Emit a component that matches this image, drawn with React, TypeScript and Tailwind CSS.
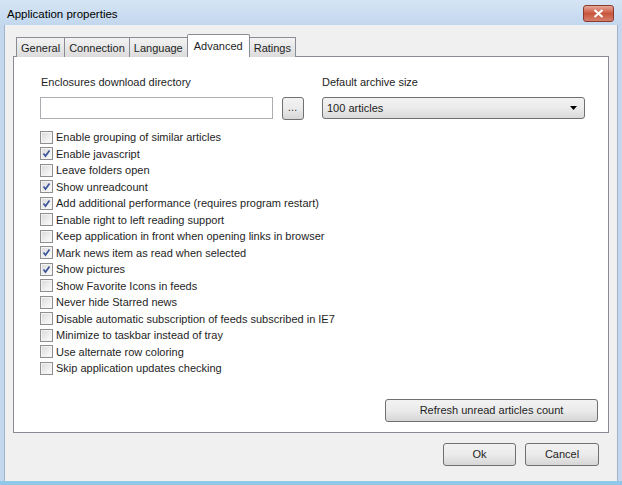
import React from 'react'

const options: { label: string; checked: boolean }[] = [
  { label: 'Enable grouping of similar articles', checked: false },
  { label: 'Enable javascript', checked: true },
  { label: 'Leave folders open', checked: false },
  { label: 'Show unreadcount', checked: true },
  { label: 'Add additional performance (requires program restart)', checked: true },
  { label: 'Enable right to left reading support', checked: false },
  { label: 'Keep application in front when opening links in browser', checked: false },
  { label: 'Mark news item as read when selected', checked: true },
  { label: 'Show pictures', checked: true },
  { label: 'Show Favorite Icons in feeds', checked: false },
  { label: 'Never hide Starred news', checked: false },
  { label: 'Disable automatic subscription of feeds subscribed in IE7', checked: false },
  { label: 'Minimize to taskbar instead of tray', checked: false },
  { label: 'Use alternate row coloring', checked: false },
  { label: 'Skip application updates checking', checked: false },
]

const tabs = ['General', 'Connection', 'Language', 'Advanced', 'Ratings']

function Checkbox({ checked }: { checked: boolean }) {
  return (
    <span className="w-[13px] h-[13px] border border-[#8f8f8f] bg-white flex items-center justify-center flex-shrink-0">
      <span className="w-[11px] h-[11px] border border-[#f4f4f4] bg-gradient-to-br from-[#dcdcdc] to-[#fbfbfb] flex items-center justify-center">
        {checked && (
          <svg width="9" height="9" viewBox="0 0 9 9">
            <path d="M1.5 4.5 L3.5 7 L7.5 1.5" fill="none" stroke="#3b559a" strokeWidth="1.7" />
          </svg>
        )}
      </span>
    </span>
  )
}

function Button({ children, className }: { children: React.ReactNode; className?: string }) {
  return (
    <div
      className={
        'h-[23px] border border-[#707070] rounded-[3px] bg-gradient-to-b from-[#f2f2f2] via-[#ebebeb] to-[#d6d6d6] flex items-center justify-center text-[#1e1e1e] ' +
        (className ?? '')
      }
    >
      {children}
    </div>
  )
}

export default function App() {
  return (
    <div
      className="w-[622px] h-[485px] flex flex-col bg-[#c4d7ec] overflow-hidden text-[11px] text-[#1e1e1e]"
      style={{ fontFamily: 'Tahoma, "Liberation Sans", Arial, sans-serif' }}
    >
      {/* Title bar */}
      <div className="h-[25px] flex-shrink-0 flex items-start justify-between bg-gradient-to-b from-[#d6e5f5] to-[#c2d7ee] pl-[7px] pr-[8px]">
        <span className="pt-[6px] text-[11.5px] text-black">Application properties</span>
        <div className="mt-[5px] w-[31px] h-[17px] rounded-[3px] border border-[#8a3a2c] bg-gradient-to-b from-[#e6a89a] via-[#c9543c] to-[#d4806b] flex items-center justify-center">
          <svg width="11" height="9" viewBox="0 0 11 9">
            <path d="M1.5 1 L9.5 8 M9.5 1 L1.5 8" stroke="#ffffff" strokeWidth="2.2" />
          </svg>
        </div>
      </div>

      {/* Client area */}
      <div className="flex-1 flex flex-col bg-[#f0f0f0] mx-[4px] border-l border-r border-[#9fb4cc] px-[8px] pt-[9px]">
        {/* Tabs */}
        <div className="flex items-end pl-[3px] h-[23px] relative z-10">
          {tabs.map(t =>
            t === 'Advanced' ? (
              <div
                key={t}
                className="h-[23px] px-[6px] bg-white border border-b-0 border-[#898c95] -ml-[1px] flex items-start pt-[3px] rounded-t-[2px] relative z-10"
              >
                {t}
              </div>
            ) : (
              <div
                key={t}
                className="h-[20px] px-[4px] bg-gradient-to-b from-[#f3f3f3] to-[#dcdcdc] border border-b-0 border-[#898c95] -ml-[1px] first:ml-0 flex items-center pt-[1px]"
              >
                {t}
              </div>
            )
          )}
        </div>

        {/* Tab panel */}
        <div className="h-[377px] -mt-[1px] bg-white border border-[#898c95] flex flex-col pl-[27px] pr-[10px] pt-[18px] pb-[10px]">
          <div className="flex">
            <div className="flex flex-col w-[264px] -ml-[1px]">
              <span className="h-[14px] leading-[14px] pl-[1px]">Enclosures download directory</span>
              <div className="flex mt-[8px]">
                <div className="w-[234px] h-[22px] border border-[#abadb3] bg-white" />
                <Button className="ml-[9px] w-[22px] h-[22px] text-[10px] tracking-[1px] pb-[2px]">…</Button>
              </div>
            </div>
            <div className="flex flex-col ml-[18px]">
              <span className="h-[14px] leading-[14px]">Default archive size</span>
              <div className="mt-[8px] w-[263px] h-[22px] border border-[#707070] rounded-[3px] bg-gradient-to-b from-[#f2f2f2] via-[#ebebeb] to-[#d9d9d9] flex items-center justify-between pl-[4px] pr-[7px]">
                <span>100 articles</span>
                <svg width="7" height="4" viewBox="0 0 7 4">
                  <path d="M0 0 H7 L3.5 4 Z" fill="#000" />
                </svg>
              </div>
            </div>
          </div>

          <div className="flex flex-col mt-[9px]">
            {options.map(o => (
              <div key={o.label} className="h-[16.5px] flex items-center gap-[3px] -ml-[1px]">
                <Checkbox checked={o.checked} />
                <span>{o.label}</span>
              </div>
            ))}
          </div>

          <div className="mt-auto flex justify-end">
            <Button className="w-[213px]">Refresh unread articles count</Button>
          </div>
        </div>

        {/* Footer buttons */}
        <div className="flex justify-end gap-[9px] pt-[10px] pr-[10px]">
          <Button className="w-[73px]">Ok</Button>
          <Button className="w-[74px]">Cancel</Button>
        </div>
        <div className="flex-1" />
      </div>
      <div className="h-[4px] flex-shrink-0 bg-[#8fc8e8]" />
    </div>
  )
}
